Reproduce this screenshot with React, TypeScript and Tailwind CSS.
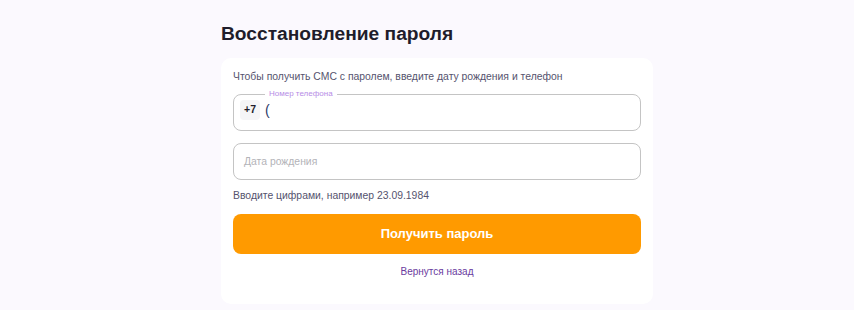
export default function App() {
  return (
    <div
      className="min-h-[310px] w-full bg-[#fbf9fe] pt-[22px]"
      style={{ fontFamily: "'Liberation Sans', Arial, sans-serif" }}
    >
      <div className="mx-auto w-[432px] translate-x-[10px]">
        <h1 className="text-[19.2px] font-bold leading-[24px] text-[#1f1d2b]">
          Восстановление пароля
        </h1>
        <div className="mt-[12px] rounded-[10px] bg-white px-[12px] pb-[22px] pt-[12px]">
          <p className="text-[10.4px] leading-[13px] text-[#55536e]">
            Чтобы получить СМС с паролем, введите дату рождения и телефон
          </p>

          <fieldset className="mt-[6px] h-[42px] rounded-[8px] border border-[#c4c4c4] px-[6px] pb-[6px]">
            <legend className="ml-[25px] px-[4px] text-[8px] leading-[10px] text-[#b68ce6]">
              Номер телефона
            </legend>
            <div className="mt-[1px] flex items-center gap-[5px]">
              <span className="flex h-[20px] w-[20px] items-center justify-center rounded-[4px] bg-[#f5f5f7] text-[10.5px] font-bold text-[#1f1d2b]">
                +7
              </span>
              <span className="text-[14px] leading-[16px] text-[#2b3a67]">(</span>
            </div>
          </fieldset>

          <div className="mt-[12px] flex h-[37px] items-center rounded-[8px] border border-[#c4c4c4] px-[10px]">
            <span className="text-[10.4px] text-[#b3b3b8]">Дата рождения</span>
          </div>

          <p className="mt-[9px] text-[10.4px] leading-[13px] text-[#55536e]">
            Вводите цифрами, например 23.09.1984
          </p>

          <button className="mt-[12px] flex h-[40px] w-full items-center justify-center rounded-[8px] bg-[#ff9a00] text-[13px] font-bold text-white">
            Получить пароль
          </button>

          <div className="mt-[4px] text-center">
            <a className="text-[10px] text-[#6a3b9e]">Вернутся назад</a>
          </div>
        </div>
      </div>
    </div>
  );
}
